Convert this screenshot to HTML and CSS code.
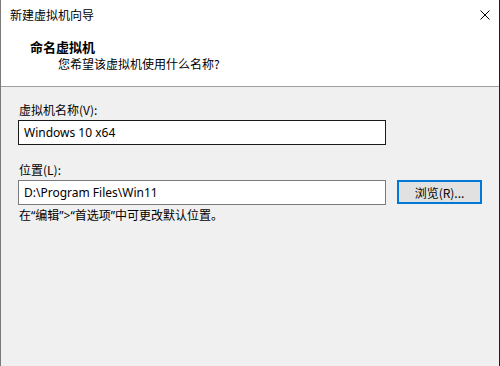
FILE: index.html
```html
<!DOCTYPE html>
<html lang="zh-CN">
<head>
  <meta charset="UTF-8">
  <title>新建虚拟机向导</title>
  <link rel="stylesheet" href="styles.css">
</head>
<body>
  <div class="window">
    <div class="header">
      <div class="titlebar">
        <span class="title">新建虚拟机向导</span>
        <svg class="close" width="10" height="10" viewBox="0 0 10 10">
          <path d="M0.5 0.5 L9.5 9.5 M9.5 0.5 L0.5 9.5" stroke="#000" stroke-width="1" fill="none"/>
        </svg>
      </div>
      <div class="heading">命名虚拟机</div>
      <div class="subheading">您希望该虚拟机使用什么名称?</div>
    </div>

    <div class="content">
      <label class="label" for="vmname">虚拟机名称(V):</label>
      <input class="field focused" id="vmname" type="text" value="Windows 10 x64">

      <label class="label second" for="location">位置(L):</label>
      <div class="row">
        <input class="field" id="location" type="text" value="D:\Program Files\Win11">
        <button class="browse">浏览(R)...</button>
      </div>

      <p class="hint">在“编辑”&gt;“首选项”中可更改默认位置。</p>
    </div>
  </div>
</body>
</html>
```

FILE: styles.css
```css
* {
  box-sizing: border-box;
  margin: 0;
  padding: 0;
}

body {
  width: 500px;
  height: 366px;
  overflow: hidden;
  font-family: "Noto Sans CJK SC", "Noto Sans", sans-serif;
  font-size: 12px;
  color: #000;
  background-color: #f0f0f0;
}

.window {
  height: 366px;
  border-left: 1px solid #7a7a7a;
  border-right: 1px solid #1e1e1e;
  background-color: #f0f0f0;
}

.header {
  height: 87px;
  background-color: #ffffff;
  border-bottom: 1px solid #a0a0a0;
}

.titlebar {
  display: flex;
  justify-content: space-between;
  align-items: center;
  height: 30px;
  padding: 0 9px 0 9px;
}

.title {
  line-height: 16px;
}

.close {
  display: block;
}

.heading {
  padding-left: 29px;
  margin-top: 8px;
  font-size: 13px;
  font-weight: bold;
  line-height: 17px;
}

.subheading {
  padding-left: 57px;
  line-height: 17px;
}

.content {
  padding: 15px 0 0 17px;
}

.label {
  display: block;
  line-height: 16px;
  padding-left: 1px;
}

.label.second {
  margin-top: 17px;
}

.field {
  display: block;
  width: 368px;
  height: 25px;
  margin-top: 2px;
  padding: 0 5px;
  font-family: "Noto Sans", "Noto Sans CJK SC", sans-serif;
  font-size: 12px;
  color: #000;
  background-color: #ffffff;
  border: 1px solid #7a7a7a;
  outline: none;
}

.field.focused {
  border-color: #1a1a1a;
}

.row {
  display: flex;
  align-items: flex-start;
  gap: 11px;
  margin-top: 2px;
}

.row .field {
  margin-top: 0;
}

.browse {
  width: 85px;
  height: 24px;
  font-family: "Noto Sans CJK SC", "Noto Sans", sans-serif;
  font-size: 12px;
  color: #000;
  background-color: #e1e1e1;
  border: 2px solid #0078d7;
}

.hint {
  margin-top: 3px;
  padding-left: 1px;
  line-height: 16px;
  font-family: "Noto Sans", "Noto Sans CJK SC", sans-serif;
}
```
